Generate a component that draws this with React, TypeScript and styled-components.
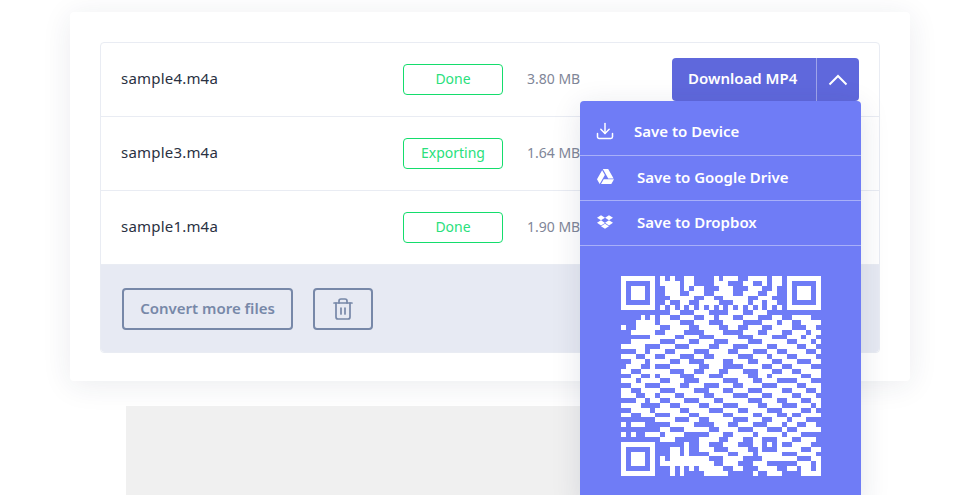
import React from "react";
import styled, { createGlobalStyle } from "styled-components";
import { Download, Trash2 } from "lucide-react";
import { FaDropbox, FaGoogleDrive } from "react-icons/fa";

const files = [
  { name: "sample4.m4a", status: "Done", size: "3.80 MB" },
  { name: "sample3.m4a", status: "Exporting", size: "1.64 MB" },
  { name: "sample1.m4a", status: "Done", size: "1.90 MB" },
];

const qrRows = [
  "1111111 0 1010011000010111001111011 0 1111111",
  "1000001 0 1111011000011100011001011 0 1000001",
  "1011101 0 0111010110001110001110010 0 1011101",
  "1011101 0 0111001110011110011100110 0 1011101",
  "1011101 0 0011111001100111110011100 0 1011101",
  "1000001 0 0100110011110001110110110 0 1000001",
  "1111111 0 1010101010101010101010101 0 1111111",
  "0000000 0 0011000111000011100111000 0 0000000",
  "0000101 0 1100111001101110011100011 0 0111100",
  "0001111 0 1111000111000111100001110 1 1001111",
  "1001111 1 0011110011110011001110011 1 1000110",
  "0011111 0 0111100001111000011100111 0 0111011",
  "0000001 1 1110011100011111000111100 0 1110110",
  "0011111 1 0001110011100011110001111 1 0011101",
  "1111100 0 1110001111001110001111001 1 1100110",
  "0001101 1 1001111000111100111000110 0 1111001",
  "1110011 0 0111000110011111000111011 1 0011110",
  "0011101 1 1100110001111001110011100 1 1100011",
  "0111001 0 0011111100111000011110011 0 0111100",
  "1100111 1 1100011001110011100011100 1 1001111",
  "0011001 0 1111000111000111110011011 1 1110011",
  "1110111 1 0011100011111000111001110 0 0011100",
  "0011100 0 1111001110001110011110001 1 1100111",
  "1100111 1 0001111000111001110001111 0 0111001",
  "1110011 0 1110011110011110001110011 1 1001110",
  "0001101 1 0011100011100111110001110 0 1110011",
  "1111000 0 1100111100111000111100111 0 0011101",
  "0011110 1 1111001111000111001111000 1 1110010",
  "1100111 0 0011110011111001111001110 0 1001111",
  "0000000 1 1110001100111110001110011 1 0111000",
  "1011100 0 0011111000011100111000111 0 1100110",
  "0000000 0 1100011111001111000111000 1 0011111",
  "1010011 1 0111100000111001111011111 0 1110000",
  "0000000 0 1110000011110011100110001 1 1001110",
  "1111111 0 0000010011000111000110101 0 0111100",
  "1000001 0 0011010011100011110010001 1 1110011",
  "1011101 0 0011010000111100111011111 0 0011110",
  "1011101 0 1011111111000111100001111 1 1100011",
  "1011101 0 1111111111100111000111000 0 0011101",
  "1000001 0 0010101011111001100011110 0 1101101",
  "1111111 0 0010100001111100000100111 0 0001111",
].map((row) => row.replace(/ /g, ""));

const GlobalStyle = createGlobalStyle`
  html, body {
    margin: 0;
    background: #fff;
    overflow: hidden;
  }
  * {
    box-sizing: border-box;
  }
`;

const Page = styled.div`
  height: 495px;
  overflow: hidden;
  padding: 12px 0 0 70px;
  font-family: "Noto Sans", "Liberation Sans", sans-serif;
`;

const Card = styled.section`
  width: 840px;
  height: 369px;
  padding: 30px;
  background: #fff;
  border-radius: 4px;
  box-shadow: 0 4px 30px rgba(30, 40, 80, 0.09);
`;

const FileTable = styled.div`
  border: 1px solid #e9ecf3;
  border-radius: 4px;
`;

const Row = styled.div`
  display: flex;
  align-items: center;
  height: 74px;
  padding-left: 20px;
  border-bottom: 1px solid #e9ecf3;
`;

const FileName = styled.span`
  width: 282px;
  padding-bottom: 3px;
  font-size: 15px;
  letter-spacing: 0.2px;
  color: #2a3142;
`;

const Status = styled.span`
  display: flex;
  align-items: center;
  justify-content: center;
  width: 100px;
  height: 31px;
  padding-bottom: 3px;
  border: 1px solid #14dd6c;
  border-radius: 4px;
  font-size: 14px;
  color: #2adf7c;
`;

const Size = styled.span`
  margin-left: 24px;
  padding-bottom: 3px;
  font-size: 14px;
  color: #7f8698;
`;

const ButtonWrap = styled.div`
  position: relative;
  display: flex;
  margin-left: auto;
  margin-right: 20px;
  height: 43px;
  border-radius: 4px;
  background: #5f68dc;
  color: #fff;
`;

const DownloadLabel = styled.span`
  display: flex;
  align-items: center;
  width: 144px;
  height: 39px;
  padding-left: 16px;
  font-size: 15px;
  font-weight: 600;
`;

const Toggle = styled.span`
  display: flex;
  align-items: center;
  justify-content: center;
  width: 43px;
  border-left: 1px solid rgba(255, 255, 255, 0.4);
`;

const Dropdown = styled.div`
  position: absolute;
  top: 100%;
  right: -2px;
  width: 281px;
  border-radius: 4px;
  background: #6f7cf6;
  box-shadow: 0 6px 30px rgba(30, 40, 80, 0.12);
`;

const MenuItem = styled.div<{ $first?: boolean }>`
  display: flex;
  align-items: center;
  height: ${(p) => (p.$first ? "55px" : "45px")};
  padding: ${(p) => (p.$first ? "6px 0 0" : "0 0 3px")};
  border-bottom: 1px solid rgba(255, 255, 255, 0.4);
  font-size: 15px;
  font-weight: 600;
  color: #fff;
`;

const MenuIcon = styled.span<{ $first?: boolean }>`
  display: flex;
  align-items: center;
  justify-content: center;
  width: ${(p) => (p.$first ? "54px" : "57px")};
  padding-right: ${(p) => (p.$first ? "4px" : "7px")};
`;

const QrBox = styled.div`
  padding: 30px 0 30px 41px;
`;

const Footer = styled.div`
  display: flex;
  gap: 20px;
  height: 87px;
  padding: 23px 0 0 21px;
  background: #e7eaf3;
  border-radius: 0 0 4px 4px;
`;

const OutlineButton = styled.span<{ $wide?: boolean }>`
  display: flex;
  align-items: center;
  justify-content: center;
  width: ${(p) => (p.$wide ? "171px" : "60px")};
  height: 42px;
  padding-bottom: ${(p) => (p.$wide ? "3px" : "0")};
  border: 2px solid #7788a8;
  border-radius: 4px;
  font-size: 15px;
  font-weight: 600;
  color: #7788a8;
`;

const AdBlock = styled.div`
  width: 728px;
  height: 90px;
  margin: 25px 0 0 56px;
  background: #f0f0f0;
`;

function QrCode() {
  const d = qrRows
    .flatMap((row, y) =>
      row.split("").map((cell, x) => (cell === "1" ? `M${x} ${y}h1v1h-1z` : ""))
    )
    .join("");
  return (
    <svg width="200" height="200" viewBox="0 0 41 41" shapeRendering="crispEdges" style={{ display: "block" }}>
      <path d={d} fill="#fff" />
    </svg>
  );
}

export default function App() {
  return (
    <Page>
      <GlobalStyle />
      <Card>
        <FileTable>
          {files.map((file, i) => (
            <Row key={file.name}>
              <FileName>{file.name}</FileName>
              <Status>{file.status}</Status>
              <Size>{file.size}</Size>
              {i === 0 && (
                <ButtonWrap>
                  <DownloadLabel>Download MP4</DownloadLabel>
                  <Toggle>
                    <svg width="20" height="12" viewBox="0 0 20 12" fill="none">
                      <path d="M1.5 10.5 10 2l8.5 8.5" stroke="#fff" strokeWidth="2" />
                    </svg>
                  </Toggle>
                  <Dropdown>
                    <MenuItem $first>
                      <MenuIcon $first>
                        <Download size={20} strokeWidth={1.8} />
                      </MenuIcon>
                      Save to Device
                    </MenuItem>
                    <MenuItem>
                      <MenuIcon>
                        <FaGoogleDrive size={17} />
                      </MenuIcon>
                      Save to Google Drive
                    </MenuItem>
                    <MenuItem>
                      <MenuIcon>
                        <FaDropbox size={16} />
                      </MenuIcon>
                      Save to Dropbox
                    </MenuItem>
                    <QrBox>
                      <QrCode />
                    </QrBox>
                  </Dropdown>
                </ButtonWrap>
              )}
            </Row>
          ))}
          <Footer>
            <OutlineButton $wide>Convert more files</OutlineButton>
            <OutlineButton>
              <Trash2 size={24} strokeWidth={1.7} />
            </OutlineButton>
          </Footer>
        </FileTable>
      </Card>
      <AdBlock />
    </Page>
  );
}
